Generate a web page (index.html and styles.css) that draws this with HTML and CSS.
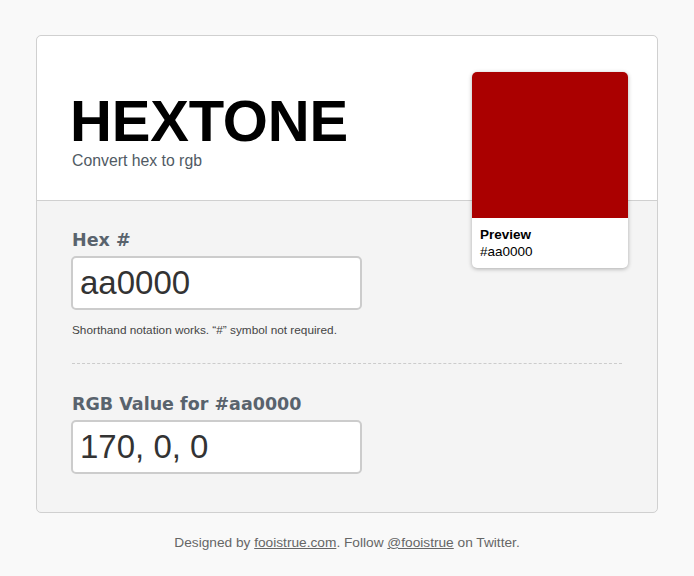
FILE: index.html
```html
<!DOCTYPE html>
<html lang="en">
<head>
    <meta charset="UTF-8">
    <title>Hextone</title>
    <link rel="stylesheet" href="styles.css">
</head>
<body>
    <div class="app">
        <div class="app-header">
            <h1 class="logo">HEXTONE</h1>
            <p class="tagline">Convert hex to rgb</p>
        </div>

        <div class="preview">
            <div class="preview-swatch"></div>
            <div class="preview-info">
                <strong>Preview</strong>
                <span>#aa0000</span>
            </div>
        </div>

        <div class="app-body">
            <label class="field-label" for="hex">Hex #</label>
            <input class="field-input" type="text" id="hex" value="aa0000">
            <p class="field-help">Shorthand notation works. “#” symbol not required.</p>

            <hr class="divider">

            <label class="field-label" for="rgb">RGB Value for #aa0000</label>
            <input class="field-input" type="text" id="rgb" value="170, 0, 0" readonly>
        </div>
    </div>

    <p class="footer">Designed by <a href="#">fooistrue.com</a>. Follow <a href="#">@fooistrue</a> on Twitter.</p>
</body>
</html>
```

FILE: styles.css
```css
body {
    margin: 0;
    background-color: #f9f9f9;
    font-family: 'Liberation Sans', Arial, sans-serif;
    color: #333333;
}
.app {
    position: relative;
    width: 620px;
    margin: 35px auto 0;
    background-color: #f4f4f4;
    border: 1px solid #d0d0d0;
    border-radius: 5px;
}
.app-header {
    background-color: #ffffff;
    border-bottom: 1px solid #d0d0d0;
    border-radius: 5px 5px 0 0;
    padding: 56px 35px 30px;
}
.logo {
    margin: 0 0 0 -2px;
    font-size: 58px;
    line-height: 58px;
    font-weight: bold;
    letter-spacing: -0.2px;
    color: #000000;
}
.tagline {
    margin: 2px 0 0;
    font-size: 15.8px;
    line-height: 18px;
    color: #505a64;
}
.preview {
    position: absolute;
    top: 36px;
    right: 29px;
    width: 156px;
    background-color: #ffffff;
    border-radius: 5px;
    overflow: hidden;
    box-shadow: 0 1px 4px rgba(0, 0, 0, 0.3);
}
.preview-swatch {
    height: 146px;
    background-color: #aa0000;
}
.preview-info {
    display: flex;
    flex-direction: column;
    padding: 9px 8px 8px;
    font-size: 13.5px;
    line-height: 16.5px;
    color: #000000;
}
.app-body {
    padding: 28px 35px 38px;
}
.field-label {
    display: block;
    font-family: 'DejaVu Sans', sans-serif;
    font-size: 17.5px;
    line-height: 22px;
    font-weight: bold;
    color: #59636d;
    margin-bottom: 5px;
}
.field-input {
    display: block;
    box-sizing: border-box;
    width: 291px;
    height: 54px;
    margin-left: -1px;
    padding: 0 7px;
    border: 2px solid #cccccc;
    border-radius: 5px;
    background-color: #ffffff;
    font-family: 'Liberation Sans', Arial, sans-serif;
    font-size: 33px;
    color: #333333;
    outline: none;
}
.field-help {
    margin: 13px 0 0;
    font-size: 11.8px;
    line-height: 14px;
    color: #444444;
}
.divider {
    margin: 26px 0 29px;
    border: 0;
    border-top: 1px dashed #cccccc;
}
.footer {
    margin: 22px 0 0;
    text-align: center;
    font-size: 13.7px;
    line-height: 16px;
    color: #666666;
}
.footer a {
    color: #666666;
}
```
